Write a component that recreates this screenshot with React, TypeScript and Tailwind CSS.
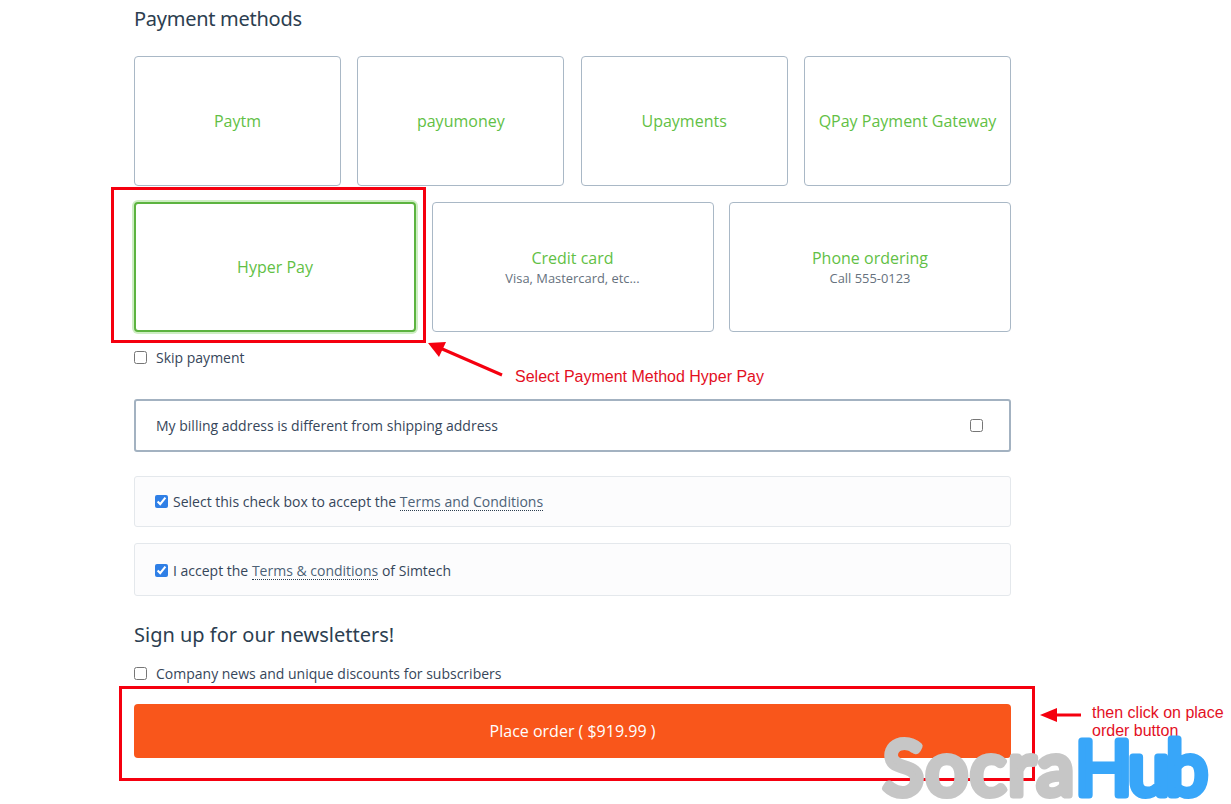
import React from 'react';

const heading = "font-['Noto_Sans',sans-serif] text-[20px] text-[#2c3e50]";

const MethodCard = ({ title, sub, active, w }: { title: string; sub?: string; active?: boolean; w: string }) => (
  <div
    className={`${w} h-[130px] rounded-[4px] bg-white flex flex-col items-center justify-center ${
      active
        ? 'border-2 border-[#5cb33f] shadow-[0_0_0_2px_#cdeec2]'
        : 'border border-[#a9b8c6]'
    }`}
  >
    <div className="text-[16px] leading-[20px] text-[#62bf45]">{title}</div>
    {sub && <div className="text-[12.9px] leading-[18px] mt-px text-[#66717d]">{sub}</div>}
  </div>
);

const TermsLink = ({ children }: { children: React.ReactNode }) => (
  <span className="text-[#4d6277] border-b border-dotted border-[#2c3e50] leading-[17px] inline-block">{children}</span>
);

const App: React.FC = () => {
  return (
    <div className="relative w-[1231px] h-[804px] overflow-hidden bg-white font-['Open_Sans',sans-serif] text-[14px] text-[#36465a]">
      <div className="w-[877px] ml-[134px] flex flex-col">
        <h2 className={`${heading} leading-[28px] mt-[5px] tracking-[-0.27px]`}>Payment methods</h2>

        <div className="flex justify-between mt-[23px]">
          <MethodCard w="w-[207px]" title="Paytm" />
          <MethodCard w="w-[207px]" title="payumoney" />
          <MethodCard w="w-[207px]" title="Upayments" />
          <MethodCard w="w-[207px]" title="QPay Payment Gateway" />
        </div>
        <div className="flex justify-between mt-4">
          <MethodCard w="w-[282px]" title="Hyper Pay" active />
          <MethodCard w="w-[282px]" title="Credit card" sub="Visa, Mastercard, etc..." />
          <MethodCard w="w-[282px]" title="Phone ordering" sub="Call 555-0123" />
        </div>

        <label className="flex items-center gap-[9px] h-5 mt-[15px]">
          <input type="checkbox" className="w-[13px] h-[13px] m-0" />
          <span>Skip payment</span>
        </label>

        <div className="flex items-center justify-between h-[53px] mt-8 border-2 border-[#a3b2c1] rounded-[3px] pl-5 pr-[26px]">
          <span>My billing address is different from shipping address</span>
          <input type="checkbox" className="w-[13px] h-[13px] m-0" />
        </div>

        <div className="flex items-center h-[51px] mt-6 border border-[#e4e8ec] rounded-[3px] bg-[#fcfcfd] pl-5">
          <input type="checkbox" defaultChecked className="w-[13px] h-[13px] m-0 mr-[5px] accent-[#2f7fe6]" />
          <span>
            Select this check box to accept the <TermsLink>Terms and Conditions</TermsLink>
          </span>
        </div>

        <div className="flex items-center h-[53px] mt-4 pt-[2px] border border-[#e4e8ec] rounded-[3px] bg-[#fcfcfd] pl-5">
          <input type="checkbox" defaultChecked className="w-[13px] h-[13px] m-0 mr-[5px] accent-[#2f7fe6]" />
          <span>
            I accept the <TermsLink>Terms &amp; conditions</TermsLink> of Simtech
          </span>
        </div>

        <h2 className={`${heading} leading-[28px] mt-[25px]`}>Sign up for our newsletters!</h2>

        <label className="flex items-center gap-[9px] h-5 mt-[14px]">
          <input type="checkbox" className="w-[13px] h-[13px] m-0" />
          <span>Company news and unique discounts for subscribers</span>
        </label>

        <button className="h-[54px] mt-[21px] rounded-[4px] bg-[#f9561b] text-white text-[16px]">
          Place order ( $919.99 )
        </button>
      </div>

      {/* annotations drawn on top of the screenshot */}
      <div className="absolute left-[111px] top-[187px] w-[315px] h-[156px] border-[3px] border-[#f5000f]" />
      <div className="absolute left-[119px] top-[686px] w-[916px] h-[95px] border-[3px] border-[#f5000f]" />
      <svg className="absolute left-0 top-0 pointer-events-none" width="1231" height="804">
        <line x1="502" y1="375" x2="440" y2="348" stroke="#f5000f" strokeWidth="3" />
        <polygon points="428,343 446,342 439,357" fill="#f5000f" />
        <line x1="1081" y1="715" x2="1052" y2="715" stroke="#f5000f" strokeWidth="3" />
        <polygon points="1040,715 1057,708 1057,722" fill="#f5000f" />
      </svg>
      <div className="absolute left-[515px] top-[368px] font-['Liberation_Sans',sans-serif] text-[16px] leading-[18px] text-[#e3101f]">
        Select Payment Method Hyper Pay
      </div>
      <div className="absolute left-[1092px] top-[704px] font-['Liberation_Sans',sans-serif] text-[16px] leading-[18px] text-[#e3101f] whitespace-nowrap">
        then click on place
        <br />
        order button
      </div>

      {/* watermark */}
      <svg className="absolute left-0 top-0 pointer-events-none" width="1231" height="804">
        <g fontFamily="Lato, sans-serif" fontWeight="400" fontSize="75" strokeWidth="7" strokeLinejoin="round">
          <text x="883" y="795" textLength="191" fill="#c6c6c6" stroke="#c6c6c6">Socra</text>
          <text x="1075" y="795" textLength="133" fill="#38a6f9" stroke="#38a6f9">Hub</text>
        </g>
      </svg>
    </div>
  );
};

export default App;
